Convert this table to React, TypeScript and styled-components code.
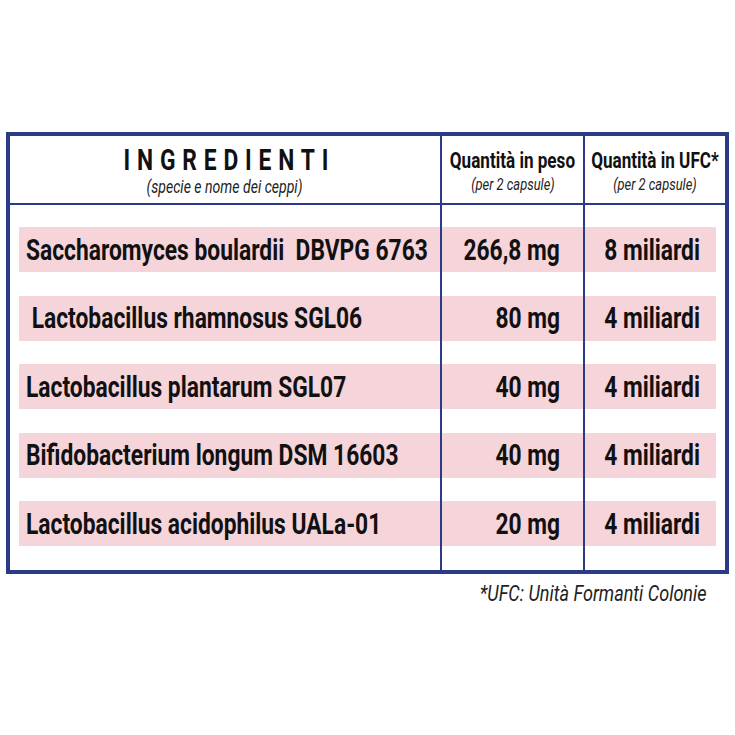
import styled, { createGlobalStyle } from 'styled-components';

const NAVY = '#2c3b88';
const PINK = '#f5d4da';

const Global = createGlobalStyle`
  body {
    margin: 0;
    background: #fff;
    font-family: Roboto, "Liberation Sans", sans-serif;
    color: #111;
  }
`;

type Align = 'left' | 'center' | 'right';

const strains = [
  { name: 'Saccharomyces boulardii  DBVPG 6763', weight: '266,8 mg', ufc: '8 miliardi' },
  { name: ' Lactobacillus rhamnosus SGL06', weight: '80 mg', ufc: '4 miliardi' },
  { name: 'Lactobacillus plantarum SGL07', weight: '40 mg', ufc: '4 miliardi' },
  { name: 'Bifidobacterium longum DSM 16603', weight: '40 mg', ufc: '4 miliardi' },
  { name: 'Lactobacillus acidophilus UALa-01', weight: '20 mg', ufc: '4 miliardi' },
];

export default function App() {
  return (
    <>
      <Global />
      <Page>
        <Table>
          <HeaderRow>
            <HeadCell>
              <Title $origin="center">INGREDIENTI</Title>
              <Note $origin="center" $big>(specie e nome dei ceppi)</Note>
            </HeadCell>
            <HeadCell $divided>
              <ColTitle $origin="center">Quantità in peso</ColTitle>
              <Note $origin="center">(per 2 capsule)</Note>
            </HeadCell>
            <HeadCell $divided>
              <ColTitle $origin="center">Quantità in UFC*</ColTitle>
              <Note $origin="center">(per 2 capsule)</Note>
            </HeadCell>
          </HeaderRow>
          <Body>
            {strains.map((s) => (
              <Row key={s.name}>
                <Cell>
                  <Bar $align="left" $edge="left">
                    <Value $origin="left">{s.name}</Value>
                  </Bar>
                </Cell>
                <Cell $divided>
                  <Bar $align="right">
                    <Value $origin="right">{s.weight}</Value>
                  </Bar>
                </Cell>
                <Cell $divided>
                  <Bar $align="center" $edge="right">
                    <Value $origin="center">{s.ufc}</Value>
                  </Bar>
                </Cell>
              </Row>
            ))}
          </Body>
        </Table>
        <Footnote>
          <FootText $origin="right" $scale={0.82}>
            *UFC: Unità Formanti Colonie
          </FootText>
        </Footnote>
      </Page>
    </>
  );
}

const Page = styled.div`
  padding: 132px 6px 0 6px;
  width: 723px;
`;

const Table = styled.div`
  border: 4px solid ${NAVY};
`;

const columns = `
  display: grid;
  grid-template-columns: 430px 143px 142px;
`;

const HeaderRow = styled.div`
  ${columns}
  height: 67px;
  border-bottom: 2px solid ${NAVY};
`;

const HeadCell = styled.div<{ $divided?: boolean }>`
  display: flex;
  flex-direction: column;
  align-items: center;
  justify-content: center;
  border-left: ${(p) => (p.$divided ? `2px solid ${NAVY}` : 'none')};
  overflow: hidden;
`;

const Squeeze = styled.span<{ $origin: Align; $scale?: number }>`
  display: inline-block;
  white-space: pre;
  transform: scaleX(${(p) => p.$scale ?? 0.76});
  transform-origin: ${(p) => p.$origin} center;
`;

const Title = styled(Squeeze)`
  font-size: 30px;
  font-weight: 700;
  letter-spacing: 9px;
  margin-right: -9px;
  line-height: 34px;
`;

const ColTitle = styled(Squeeze)`
  font-size: 22.5px;
  font-weight: 700;
  line-height: 28px;
`;

const Note = styled(Squeeze)<{ $big?: boolean }>`
  font-size: ${(p) => (p.$big ? '18.5px' : '17px')};
  font-style: italic;
  font-weight: 400;
  line-height: 20px;
  color: #222;
`;

const Body = styled.div``;

const Row = styled.div`
  ${columns}
`;

const Cell = styled.div<{ $divided?: boolean }>`
  padding: 11.5px 0 12px;
  border-left: ${(p) => (p.$divided ? `2px solid ${NAVY}` : 'none')};

  ${Row}:first-child > & {
    padding-top: 22px;
  }
  ${Row}:last-child > & {
    padding-bottom: 24px;
  }
`;

const Bar = styled.div<{ $align: Align; $edge?: 'left' | 'right' }>`
  height: 45px;
  display: flex;
  align-items: center;
  justify-content: ${(p) =>
    p.$align === 'left' ? 'flex-start' : p.$align === 'right' ? 'flex-end' : 'center'};
  background: ${PINK};
  margin-left: ${(p) => (p.$edge === 'left' ? '9px' : '0')};
  margin-right: ${(p) => (p.$edge === 'right' ? '9px' : '0')};
  padding-left: ${(p) => (p.$align === 'left' ? '7px' : p.$align === 'center' ? '4px' : '0')};
  padding-right: ${(p) => (p.$align === 'right' ? '23px' : '0')};
`;

const Value = styled(Squeeze)`
  font-size: 30px;
  font-weight: 700;
  line-height: 34px;
`;

const Footnote = styled.div`
  display: flex;
  justify-content: flex-end;
  padding: 7px 22px 0 0;
`;

const FootText = styled(Squeeze)`
  font-size: 22px;
  font-style: italic;
  line-height: 26px;
  color: #222;
`;
